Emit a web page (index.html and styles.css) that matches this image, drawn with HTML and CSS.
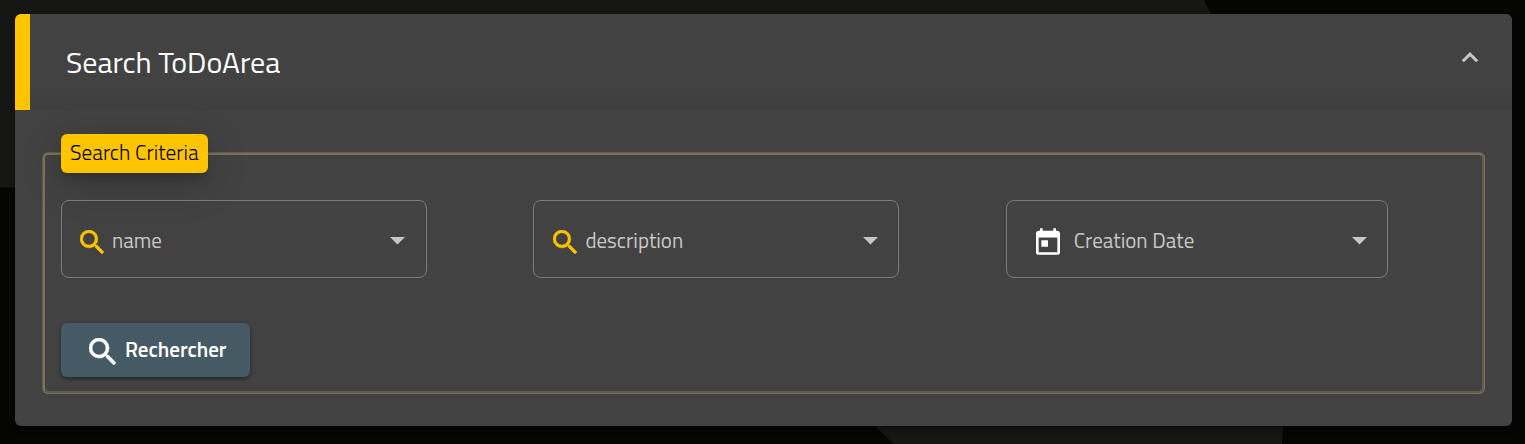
FILE: index.html
```
<!DOCTYPE html>
<html lang="fr">
<head>
<meta charset="utf-8">
<title>Search ToDoArea</title>
<link rel="stylesheet" href="styles.css">
</head>
<body>
<svg class="backdrop" viewBox="0 0 1525 444" aria-hidden="true">
  <path d="M0 0H1204L1225 42L890 240L0 187Z"/>
  <path d="M860 412L894 444H1282L1284 412Z"/>
</svg>
<main class="panel">
  <header class="panel-header">
    <h1 class="panel-title">Search ToDoArea</h1>
    <svg class="chevron" viewBox="0 0 18 12"><path d="M1.8 10.3L9 3.2L16.2 10.3"/></svg>
  </header>
  <section class="panel-body">
    <fieldset class="criteria">
      <legend class="legend">Search Criteria</legend>
      <div class="fields">
        <div class="field">
          <svg class="search-icon" viewBox="3 3 17.5 17.5"><path d="M15.5 14h-.79l-.28-.27A6.47 6.47 0 0 0 16 9.5 6.5 6.5 0 1 0 9.5 16c1.61 0 3.09-.59 4.23-1.57l.27.28v.79l5 4.99L20.49 19zm-6 0a4.5 4.5 0 1 1 0-9 4.5 4.5 0 0 1 0 9z"/></svg>
          <span class="label">name</span>
          <svg class="caret" viewBox="0 0 15 8"><path d="M0 0H15L7.5 7.5Z"/></svg>
        </div>
        <div class="field field-description">
          <svg class="search-icon" viewBox="3 3 17.5 17.5"><path d="M15.5 14h-.79l-.28-.27A6.47 6.47 0 0 0 16 9.5 6.5 6.5 0 1 0 9.5 16c1.61 0 3.09-.59 4.23-1.57l.27.28v.79l5 4.99L20.49 19zm-6 0a4.5 4.5 0 1 1 0-9 4.5 4.5 0 0 1 0 9z"/></svg>
          <span class="label">description</span>
          <svg class="caret" viewBox="0 0 15 8"><path d="M0 0H15L7.5 7.5Z"/></svg>
        </div>
        <div class="field field-date">
          <svg class="date-icon" viewBox="3 1 18 20"><path d="M19 3h-1V1h-2v2H8V1H6v2H5c-1.11 0-1.99.9-1.99 2L3 19a2 2 0 0 0 2 2h14c1.1 0 2-.9 2-2V5c0-1.1-.9-2-2-2zm0 16H5V8h14v11zM7 10h5v5H7z"/></svg>
          <span class="label date-text">Creation Date</span>
          <svg class="caret" viewBox="0 0 15 8"><path d="M0 0H15L7.5 7.5Z"/></svg>
        </div>
      </div>
      <button class="submit" type="button">
        <svg class="submit-icon" viewBox="3 3 17.5 17.5"><path d="M15.5 14h-.79l-.28-.27A6.47 6.47 0 0 0 16 9.5 6.5 6.5 0 1 0 9.5 16c1.61 0 3.09-.59 4.23-1.57l.27.28v.79l5 4.99L20.49 19zm-6 0a4.5 4.5 0 1 1 0-9 4.5 4.5 0 0 1 0 9z"/></svg>
        <span class="submit-text">Rechercher</span>
      </button>
    </fieldset>
  </section>
</main>
</body>
</html>
```
FILE: styles.css
```
* { box-sizing: border-box; }
body {
  margin: 0;
  height: 444px;
  padding: 14px 13px 18px 15px;
  overflow: hidden;
  background: #050503;
  font-family: "Titillium Web", Roboto, sans-serif;
  color: #fff;
}
.backdrop {
  position: absolute;
  inset: 0;
  width: 1525px;
  height: 444px;
  fill: #161614;
}
.panel {
  position: relative;
  height: 412px;
  border-radius: 6px;
  background: #424242;
  overflow: hidden;
  box-shadow: 0 4px 6px rgba(0, 0, 0, .4);
}
.panel-header {
  display: flex;
  justify-content: space-between;
  height: 96px;
  padding: 0 33px 0 36px;
  border-left: 15px solid #ffc400;
  background: linear-gradient(#424242 75%, #3f3f3f);
}
.panel-title {
  margin: 0;
  font-size: 30px;
  line-height: 97px;
  font-weight: 400;
  white-space: nowrap;
}
.chevron {
  width: 18px;
  height: 12px;
  margin-top: 37px;
  fill: none;
  stroke: #c6c6c6;
  stroke-width: 3;
}
.panel-body { padding: 24px 27px 0; }
.criteria {
  height: 260px;
  margin: 0;
  padding: 0 15px 0 16px;
  border: 3px groove rgba(255, 226, 153, .3);
  border-radius: 6px;
}
.legend {
  height: 39px;
  width: 147px;
  padding: 0 0 0 9px;
  border-radius: 6px;
  background: #ffc400;
  color: #000;
  font-size: 21.3px;
  line-height: 37px;
  font-weight: 300;
  white-space: nowrap;
  box-shadow: 0 8px 12px -4px rgba(0, 0, 0, .25), 0 10px 42px rgba(0, 0, 0, .2);
}
.fields {
  display: grid;
  grid-template-columns: 366px 366px 382px;
  column-gap: 106.4px;
  margin-top: 27px;
}
.field {
  display: flex;
  align-items: center;
  height: 78px;
  padding: 2px 21px 0 18px;
  border: 1px solid #7b7b7b;
  border-radius: 8px;
  color: #c6c6c6;
}
.field-description { padding-left: 19px; padding-right: 20px; }
.field-date { padding-left: 29px; padding-right: 20px; }
.search-icon {
  width: 24px;
  height: 24px;
  margin-top: 3px;
  fill: #ffc400;
  stroke: #ffc400;
  stroke-width: .35;
}
.date-icon { width: 24px; height: 27px; margin-top: 2px; fill: #fff; }
.label { margin-left: 8px; font-size: 21px; line-height: 30px; white-space: nowrap; }
.date-text { margin-left: 14px; }
.caret { width: 15px; height: 8px; margin-left: auto; margin-top: 1px; fill: #c6c6c6; }
.submit {
  display: flex;
  align-items: center;
  width: 189px;
  height: 54px;
  margin: 45px 0 0;
  padding: 0 0 0 28px;
  border: 0;
  border-radius: 6px;
  background: #455a64;
  color: #fff;
  font: 600 21px/30px "Titillium Web", Roboto, sans-serif;
  box-shadow: 0 2px 4px rgba(0, 0, 0, .45);
}
.submit-icon { width: 27px; height: 27px; margin-top: 3px; fill: #fff; stroke: #fff; stroke-width: .35; }
.submit-text { margin: -2px 0 0 9px; }
```
